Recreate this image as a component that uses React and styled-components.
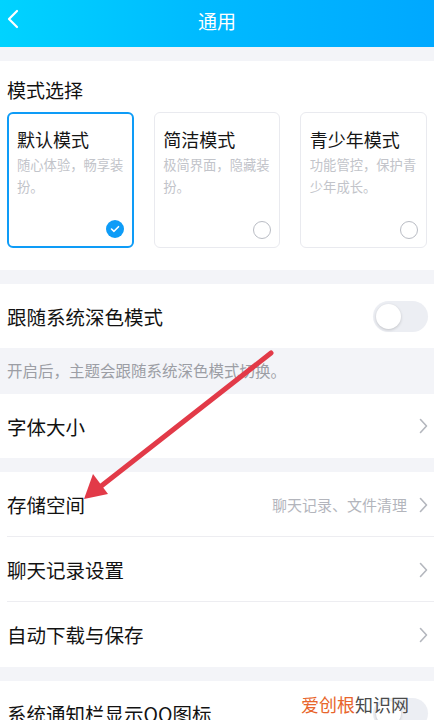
import React from "react";
import styled, { createGlobalStyle } from "styled-components";

const GlobalStyle = createGlobalStyle`
  html, body {
    margin: 0;
    padding: 0;
    background: #f3f4f8;
    font-family: "Noto Sans CJK SC", "Noto Sans", sans-serif;
  }
`;

const modes = [
  { title: "默认模式", desc: "随心体验，畅享装扮。", active: true },
  { title: "简洁模式", desc: "极简界面，隐藏装扮。" },
  { title: "青少年模式", desc: "功能管控，保护青少年成长。" },
];

function Chevron() {
  return (
    <svg width="9" height="16" viewBox="0 0 9 16">
      <path d="M1.5 1.5 L7.5 8 L1.5 14.5" fill="none" stroke="#b4b7be" strokeWidth="1.6" strokeLinecap="round" strokeLinejoin="round" />
    </svg>
  );
}

export default function App() {
  return (
    <Page>
      <GlobalStyle />
      <Header>
        <Back>
          <svg width="14" height="20" viewBox="0 0 14 20">
            <path d="M11 2 L3 10 L11 18" fill="none" stroke="#fff" strokeWidth="2.2" strokeLinecap="round" strokeLinejoin="round" />
          </svg>
        </Back>
        <Title>通用</Title>
      </Header>

      <Section>
        <Label>模式选择</Label>
        <Cards>
          {modes.map((m) => (
            <Card key={m.title} active={m.active}>
              <CardTitle>{m.title}</CardTitle>
              <CardDesc>{m.desc}</CardDesc>
              <Radio active={m.active}>
                {m.active && (
                  <svg width="10" height="8" viewBox="0 0 10 8">
                    <path d="M1.5 4 L4 6.3 L8.5 1.7" fill="none" stroke="#fff" strokeWidth="1.6" strokeLinecap="round" strokeLinejoin="round" />
                  </svg>
                )}
              </Radio>
            </Card>
          ))}
        </Cards>
      </Section>

      <Section>
        <Row>
          <RowText>跟随系统深色模式</RowText>
          <Toggle><Knob /></Toggle>
        </Row>
      </Section>
      <Note>开启后，主题会跟随系统深色模式切换。</Note>

      <Section>
        <Row>
          <RowText>字体大小</RowText>
          <Chevron />
        </Row>
      </Section>

      <Section>
        <Row divider tall>
          <RowText>存储空间</RowText>
          <Right>
            <Hint>聊天记录、文件清理</Hint>
            <Chevron />
          </Right>
        </Row>
        <Row divider tall>
          <RowText>聊天记录设置</RowText>
          <Chevron />
        </Row>
        <Row tall>
          <RowText>自动下载与保存</RowText>
          <Chevron />
        </Row>
      </Section>

      <Section>
        <Row>
          <RowText>系统通知栏显示QQ图标</RowText>
          <Toggle><Knob /></Toggle>
        </Row>
      </Section>

      <Arrow width="434" height="720" viewBox="0 0 434 720">
        <line x1="271" y1="353" x2="100" y2="487" stroke="#e23a48" strokeWidth="5" strokeLinecap="round" />
        <polygon points="84,499 93,474 108,494" fill="#e23a48" />
      </Arrow>

      <Watermark>
        <Orange>爱创根</Orange>知识网
      </Watermark>
    </Page>
  );
}

const Page = styled.div`
  position: relative;
  width: 434px;
  height: 720px;
  overflow: hidden;
  background: #f3f4f8;
  display: flex;
  flex-direction: column;
  gap: 14px;
`;

const Header = styled.div`
  position: relative;
  height: 47px;
  flex-shrink: 0;
  background: linear-gradient(90deg, #00d3ff 0%, #00bbff 45%, #00a8ff 100%);
  display: flex;
  align-items: center;
  justify-content: center;
`;

const Back = styled.div`
  position: absolute;
  left: 6px;
  top: 9px;
`;

const Title = styled.div`
  color: #fff;
  font-size: 19px;
  margin-top: -6px;
`;

const Section = styled.div`
  background: #fff;
  flex-shrink: 0;
`;

const Label = styled.div`
  font-size: 19px;
  color: #111;
  padding: 16px 7px 0;
  line-height: 26px;
`;

const Cards = styled.div`
  display: grid;
  grid-template-columns: repeat(3, 1fr);
  gap: 20px;
  padding: 9px 7px 22px;
`;

const Card = styled.div`
  position: relative;
  height: 136px;
  box-sizing: border-box;
  border-radius: 6px;
  border: ${(p) => (p.active ? "2px solid #0e9cf7" : "1.5px solid #e9eaef")};
  padding: ${(p) => (p.active ? "13px 4px 0 8px" : "13.5px 4.5px 0 8.5px")};
`;

const CardTitle = styled.div`
  font-size: 18px;
  color: #151515;
  line-height: 24px;
`;

const CardDesc = styled.div`
  font-size: 13.3px;
  color: #c2c4ca;
  line-height: 22px;
  margin-top: 3px;
`;

const Radio = styled.div`
  position: absolute;
  right: 8px;
  bottom: 8px;
  width: 18px;
  height: 18px;
  border-radius: 50%;
  box-sizing: border-box;
  background: ${(p) => (p.active ? "#0e9cf7" : "#fff")};
  border: ${(p) => (p.active ? "none" : "1.5px solid #b9bcc4")};
  display: flex;
  align-items: center;
  justify-content: center;
`;

const Row = styled.div`
  position: relative;
  height: ${(p) => (p.tall ? "65px" : "64px")};
  display: flex;
  align-items: center;
  justify-content: space-between;
  padding: 0 6px 0 7px;
  &::after {
    content: "";
    display: ${(p) => (p.divider ? "block" : "none")};
    position: absolute;
    left: 7px;
    right: 0;
    bottom: 0;
    height: 1px;
    background: #ededf1;
  }
`;

const RowText = styled.div`
  font-size: 19.5px;
  color: #121212;
  white-space: nowrap;
`;

const Right = styled.div`
  display: flex;
  align-items: center;
  gap: 12px;
`;

const Hint = styled.div`
  font-size: 15px;
  color: #b3b5bc;
`;

const Toggle = styled.div`
  width: 55px;
  height: 31px;
  border-radius: 16px;
  background: #eceef3;
  display: flex;
  align-items: center;
  padding-left: 1px;
  box-sizing: border-box;
  flex-shrink: 0;
`;

const Knob = styled.div`
  width: 25px;
  height: 25px;
  border-radius: 50%;
  background: #fff;
  box-shadow: 0 1px 3px rgba(0, 0, 0, 0.18);
  margin-left: 2px;
`;

const Note = styled.div`
  font-size: 15.5px;
  color: #9c9ea5;
  padding: 0 7px;
  margin: -14px 0;
  height: 46px;
  line-height: 44px;
  flex-shrink: 0;
`;

const Arrow = styled.svg`
  position: absolute;
  left: 0;
  top: 0;
  pointer-events: none;
`;

const Watermark = styled.div`
  position: absolute;
  left: 301px;
  top: 691px;
  font-size: 18px;
  line-height: 26px;
  color: #4a4a4a;
  font-family: "Noto Sans CJK SC", sans-serif;
`;

const Orange = styled.span`
  color: #e8652b;
`;
